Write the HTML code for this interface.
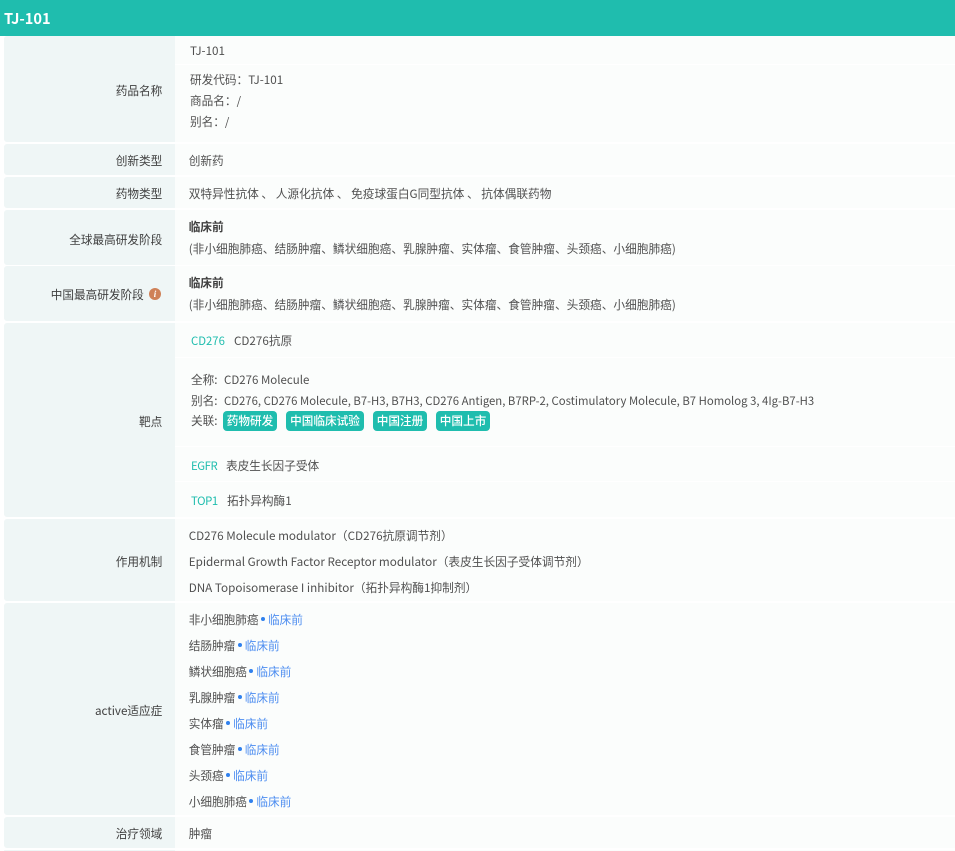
<!DOCTYPE html>
<html lang="zh"><head><meta charset="utf-8"><title>TJ-101</title>
<style>
html,body{margin:0;padding:0;background:#fff}
body{width:955px;height:851px;position:relative;overflow:hidden;font-family:"Noto Sans CJK SC",sans-serif;font-size:11.65px;color:#505050}
.hd{position:absolute;left:0;top:0;width:955px;height:36px;background:#1fbdae;color:#fff;font-weight:700;font-size:14.6px;line-height:37px;padding-left:4px;box-sizing:border-box}
.l{position:absolute;left:4px;width:171px;background:#eff6f6;border-radius:3px 0 0 3px}
.r{position:absolute;left:175px;width:780px;background:#fbfdfc}
.sep{position:absolute;left:175px;width:780px;height:1px;background:#fff}
.t{position:absolute;white-space:nowrap;line-height:18px}
.k{right:792.7px;color:#404040}
.v{left:188.7px;color:#505050}
u{text-decoration:none;font-size:11.33px}
.g{color:#1fbdae;font-size:11.33px}
.n{letter-spacing:-.4px}
.w{font-size:11.7px}
.b{font-weight:700;color:#404040}
.p{color:#4d8df0}
.d{display:inline-block;width:4px;height:4px;border-radius:50%;background:#2f80ed;margin:0 3px 0 2.5px;vertical-align:3px}
.tag{position:absolute;top:411px;height:20px;line-height:20px;background:#1fbdae;color:#fff;border-radius:4px;text-align:center;font-weight:500;width:54px}
.i{position:absolute;left:149px;top:288px;width:12px;height:12px;border-radius:50%;background:#cf8158;color:#fff;font:italic 700 9px/12px "Liberation Serif",serif;text-align:center}
</style></head><body>
<div class="hd">TJ-101</div>

<div class="l" style="top:36px;height:106px"></div><div class="r" style="top:36px;height:106px"></div>
<div class="l" style="top:144px;height:31px"></div><div class="r" style="top:144px;height:31px"></div>
<div class="l" style="top:177px;height:31px"></div><div class="r" style="top:177px;height:31px"></div>
<div class="l" style="top:210px;height:55px"></div><div class="r" style="top:210px;height:55px"></div>
<div class="l" style="top:266px;height:55px"></div><div class="r" style="top:266px;height:55px"></div>
<div class="l" style="top:323px;height:194px"></div><div class="r" style="top:323px;height:194px"></div>
<div class="l" style="top:519px;height:82px"></div><div class="r" style="top:519px;height:82px"></div>
<div class="l" style="top:603px;height:212px"></div><div class="r" style="top:603px;height:212px"></div>
<div class="l" style="top:817px;height:31px"></div><div class="r" style="top:817px;height:31px"></div>
<div class="l" style="top:850px;height:1px"></div><div class="r" style="top:850px;height:1px"></div>
<div class="sep" style="top:64px"></div>
<div class="sep" style="top:357px"></div>
<div class="sep" style="top:446px"></div>
<div class="sep" style="top:481px"></div>

<div class="t k" style="top:82px">药品名称</div>
<div class="t v" style="left:190px;top:42px">TJ-101</div>
<div class="t v" style="left:190px;top:71px">研发代码：TJ-101</div>
<div class="t v" style="left:190px;top:92px">商品名：<u>/</u></div>
<div class="t v" style="left:190px;top:113px">别名：<u>/</u></div>

<div class="t k" style="top:152px">创新类型</div>
<div class="t v" style="top:152px">创新药</div>

<div class="t k" style="top:185px">药物类型</div>
<div class="t v w" style="top:185px">双特异性抗体 、 人源化抗体 、 免疫球蛋白G同型抗体 、 抗体偶联药物</div>

<div class="t k" style="top:231px">全球最高研发阶段</div>
<div class="t v b" style="top:218px">临床前</div>
<div class="t v w" style="top:240px">(非小细胞肺癌、结肠肿瘤、鳞状细胞癌、乳腺肿瘤、实体瘤、食管肿瘤、头颈癌、小细胞肺癌)</div>

<div class="t" style="left:50.7px;top:286px;color:#404040">中国最高研发阶段</div>
<div class="i">i</div>
<div class="t v b" style="top:274px">临床前</div>
<div class="t v w" style="top:296px">(非小细胞肺癌、结肠肿瘤、鳞状细胞癌、乳腺肿瘤、实体瘤、食管肿瘤、头颈癌、小细胞肺癌)</div>

<div class="t k" style="top:413px">靶点</div>
<div class="t g" style="left:191px;top:332px">CD276</div>
<div class="t v" style="left:234px;top:332px">CD276抗原</div>
<div class="t v" style="left:191px;top:371px">全称:<span style="position:absolute;left:33px;top:0;font-size:11.5px">CD276 Molecule</span></div>
<div class="t v" style="left:191px;top:392px">别名:<span style="position:absolute;left:33px;top:0"><u>CD276, CD276 Molecule, B7-H3, B7H3, CD276 Antigen, B7RP-2, Costimulatory Molecule, B7 Homolog 3, 4Ig-B7-H3</u></span></div>
<div class="t v" style="left:191px;top:412px">关联:</div>
<div class="tag" style="left:223px">药物研发</div>
<div class="tag" style="left:286px;width:78px">中国临床试验</div>
<div class="tag" style="left:373px">中国注册</div>
<div class="tag" style="left:436px">中国上市</div>
<div class="t g n" style="left:191px;top:457px">EGFR</div>
<div class="t v" style="left:226px;top:457px">表皮生长因子受体</div>
<div class="t g n" style="left:191px;top:492px">TOP1</div>
<div class="t v" style="left:227px;top:492px">拓扑异构酶1</div>

<div class="t k" style="top:553px">作用机制</div>
<div class="t v w" style="top:527px">CD276 Molecule modulator（CD276抗原调节剂）</div>
<div class="t v w" style="top:553px">Epidermal Growth Factor Receptor modulator（表皮生长因子受体调节剂）</div>
<div class="t v w" style="top:579px">DNA Topoisomerase I inhibitor（拓扑异构酶1抑制剂）</div>

<div class="t k" style="top:702px">active适应症</div>
<div class="t v" style="top:611px">非小细胞肺癌<span class="d"></span><span class="p">临床前</span></div>
<div class="t v" style="top:637px">结肠肿瘤<span class="d"></span><span class="p">临床前</span></div>
<div class="t v" style="top:663px">鳞状细胞癌<span class="d"></span><span class="p">临床前</span></div>
<div class="t v" style="top:689px">乳腺肿瘤<span class="d"></span><span class="p">临床前</span></div>
<div class="t v" style="top:715px">实体瘤<span class="d"></span><span class="p">临床前</span></div>
<div class="t v" style="top:741px">食管肿瘤<span class="d"></span><span class="p">临床前</span></div>
<div class="t v" style="top:767px">头颈癌<span class="d"></span><span class="p">临床前</span></div>
<div class="t v" style="top:793px">小细胞肺癌<span class="d"></span><span class="p">临床前</span></div>

<div class="t k" style="top:825px">治疗领域</div>
<div class="t v" style="top:825px">肿瘤</div>
</body></html>
